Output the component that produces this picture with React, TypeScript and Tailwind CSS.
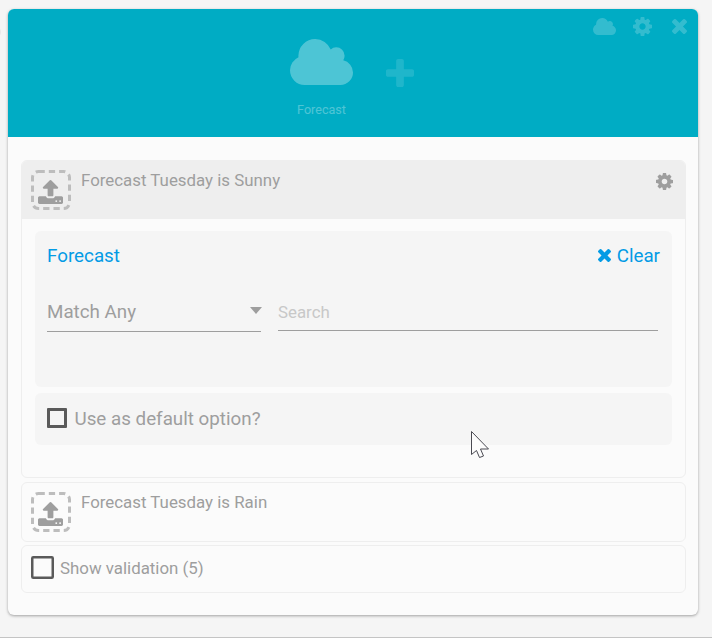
import React from "react";

const PATHS = {
  cloud: {
    box: "64 128 1920 1408",
    d: "M1984 1152q0 159-112.5 271.5t-271.5 112.5h-1088q-185 0-316.5-131.5t-131.5-316.5q0-132 71-241.5t187-163.5q-2-28-2-43 0-212 150-362t362-150q158 0 286.5 88t187.5 230q70-62 166-62 106 0 181 75t75 181q0 75-41 138 129 30 213 134.5t84 239.5z",
  },
  cog: {
    box: "128 128 1536 1536",
    d: "M1152 896q0-106-75-181t-181-75-181 75-75 181 75 181 181 75 181-75 75-181zm512-109v222q0 12-8 23t-20 13l-185 28q-19 54-39 91 35 50 107 138 10 12 10 25t-9 23q-27 37-99 108t-94 71q-12 0-26-9l-138-108q-44 23-91 38-16 136-29 186-7 28-36 28h-222q-14 0-24.5-8.5t-11.5-21.5l-28-184q-49-16-90-37l-141 107q-10 9-25 9-14 0-25-11-126-114-165-168-7-10-7-23 0-12 8-23 15-21 51-66.5t54-70.5q-27-50-41-99l-183-27q-13-2-21-12.5t-8-23.5v-222q0-12 8-23t19-13l186-28q14-46 39-92-40-57-107-138-10-12-10-24 0-10 9-23 26-36 98.5-107.5t94.5-71.5q13 0 26 10l138 107q44-23 91-38 16-136 29-186 7-28 36-28h222q14 0 24.5 8.5t11.5 21.5l28 184q49 16 90 37l142-107q9-9 24-9 13 0 25 10 129 119 165 170 7 8 7 22 0 12-8 23-15 21-51 66.5t-54 70.5q26 50 41 98l183 28q13 2 21 12.5t8 23.5z",
  },
  times: {
    box: "302 366 1188 1188",
    d: "M1490 1322q0 40-28 68l-136 136q-28 28-68 28t-68-28l-294-294-294 294q-28 28-68 28t-68-28l-136-136q-28-28-28-68t28-68l294-294-294-294q-28-28-28-68t28-68l136-136q28-28 68-28t68 28l294 294 294-294q28-28 68-28t68 28l136 136q28 28 28 68t-28 68l-294 294 294 294q28 28 28 68z",
  },
  plus: {
    box: "192 128 1408 1408",
    d: "M1600 736v192q0 40-28 68t-68 28h-416v416q0 40-28 68t-68 28h-192q-40 0-68-28t-28-68v-416h-416q-40 0-68-28t-28-68v-192q0-40 28-68t68-28h416v-416q0-40 28-68t68-28h192q40 0 68 28t28 68v416h416q40 0 68 28t28 68z",
  },
  upload: {
    box: "64 64 1664 1600",
    d: "M1344 1472q0-26-19-45t-45-19-45 19-19 45 19 45 45 19 45-19 19-45zm256 0q0-26-19-45t-45-19-45 19-19 45 19 45 45 19 45-19 19-45zm128-224v320q0 40-28 68t-68 28h-1472q-40 0-68-28t-28-68v-320q0-40 28-68t68-28h427q21 56 70.5 92t110.5 36h256q61 0 110.5-36t70.5-92h427q40 0 68 28t28 68zm-325-648q-17 40-59 40h-256v448q0 26-19 45t-45 19h-256q-26 0-45-19t-19-45v-448h-256q-42 0-59-40-17-39 14-69l448-448q18-19 45-19t45 19l448 448q31 30 14 69z",
  },
};

function Icon({ name, className }: { name: keyof typeof PATHS; className: string }) {
  return (
    <svg viewBox={PATHS[name].box} preserveAspectRatio="none" fill="currentColor" className={`shrink-0 ${className}`}>
      <path d={PATHS[name].d} />
    </svg>
  );
}

function UploadSlot() {
  return (
    <svg viewBox="0 0 40 40" className="h-10 w-10 shrink-0">
      <rect x="1.5" y="1.5" width="37" height="37" rx="6" fill="none" stroke="#bdbdbd" strokeWidth="3" strokeDasharray="6.3 4" />
      <svg x="7" y="10" width="25" height="24" viewBox={PATHS.upload.box} preserveAspectRatio="none" fill="#9e9e9e">
        <path d={PATHS.upload.d} />
      </svg>
    </svg>
  );
}

export default function App() {
  return (
    <div className="h-[638px] w-[712px] overflow-hidden border-b border-[#c4c4c4] bg-[#f5f5f5] pt-[9px] pl-2 font-['Roboto',sans-serif] text-[#9e9e9e]">
      <div className="h-[606px] w-[690px] overflow-hidden rounded-md bg-[#fbfbfb] shadow-[0_1px_3px_rgba(0,0,0,0.35)]">
        <header className="flex h-32 items-start bg-[#00acc4] text-white">
          <div className="ml-[282px] flex w-[63px] flex-col items-center pt-[30px]">
            <Icon name="cloud" className="h-[46px] w-[63px] opacity-30" />
            <span className="mt-[15px] text-[12.6px] leading-5 opacity-30">Forecast</span>
          </div>
          <Icon name="plus" className="mt-[50px] ml-[33px] h-7 w-7 opacity-12" />
          <div className="mt-2 mr-[11px] ml-auto flex h-[19px] items-center opacity-20">
            <Icon name="cloud" className="mb-px h-[17px] w-[23px]" />
            <Icon name="cog" className="ml-[17px] h-[19px] w-[19px]" />
            <Icon name="times" className="ml-[20.5px] h-[15px] w-[15px]" />
          </div>
        </header>

        <main className="pt-[23px] pr-3 pl-[13px]">
          <section className="h-[318px] overflow-hidden rounded-md border border-[#eeeeee]">
            <div className="flex h-[58px] bg-[#eeeeee] pt-[9px] pr-[12.5px] pl-[9px]">
              <UploadSlot />
              <span className="ml-[10px] text-[16.88px] leading-5">Forecast Tuesday is Sunny</span>
              <Icon name="cog" className="mt-[2.5px] ml-auto h-[17px] w-[17px]" />
            </div>
            <div className="flex flex-col gap-1.5 px-[13px] pt-3">
              <div className="h-[156px] rounded-md bg-[#f5f5f5] px-3 pt-[13px]">
                <div className="flex h-6 items-center text-[18.8px] leading-6 text-[#039be5]">
                  <span>Forecast</span>
                  <Icon name="times" className="mr-[5.5px] mb-px ml-auto h-[13px] w-[13px]" />
                  <span>Clear</span>
                </div>
                <div className="mt-[23px] flex items-start gap-[17px]">
                  <div className="flex h-[41px] w-[214px] items-center justify-between border-b border-[#9e9e9e] pt-0.5 text-[18.8px]">
                    <span>Match Any</span>
                    <span className="-mr-px mb-1 h-0 w-0 border-x-6 border-t-7 border-x-transparent border-t-[#9e9e9e]" />
                  </div>
                  <div className="flex h-10 w-[380px] items-center border-b border-[#9e9e9e] pt-1 text-[16.88px] text-[#c8c8c8]">Search</div>
                </div>
              </div>
              <div className="flex h-[52px] items-center rounded-md bg-[#f5f5f5] pl-3 text-[18.8px]">
                <span className="mb-0.5 h-5 w-5 rounded-[1px] border-3 border-[#5a5a5a]" />
                <span className="ml-[7.5px]">Use as default option?</span>
              </div>
            </div>
          </section>
          <section className="mt-1 flex h-[60px] rounded-md border border-[#eeeeee] pt-[9px] pl-[9px]">
            <UploadSlot />
            <span className="ml-[10px] text-[16.88px] leading-5">Forecast Tuesday is Rain</span>
          </section>
          <section className="mt-[3px] flex h-12 items-center rounded-md border border-[#eeeeee] pb-px pl-[9px] text-[16.88px]">
            <svg viewBox="0 0 23 23" className="mb-0.5 h-[23px] w-[23px] shrink-0">
              <rect x="1.25" y="1.25" width="20.5" height="20.5" rx="1" fill="none" stroke="#5a5a5a" strokeWidth="2.5" />
            </svg>
            <span className="ml-1.5">Show validation (5)</span>
          </section>
        </main>
      </div>
      <span className="absolute top-[26px] left-[-11px] h-3 w-3 rounded-full bg-[#e8e8e8]" />
      <svg className="pointer-events-none absolute top-[430px] left-[470px] h-[30px] w-5" viewBox="0 0 20 30">
        <path d="M1.5 1.5V24.5L6.5 20.5L9.5 27.5L13.5 26L10.5 19H18.5Z" fill="#fcfcfc" stroke="#4a4a52" strokeWidth="1" />
      </svg>
    </div>
  );
}
